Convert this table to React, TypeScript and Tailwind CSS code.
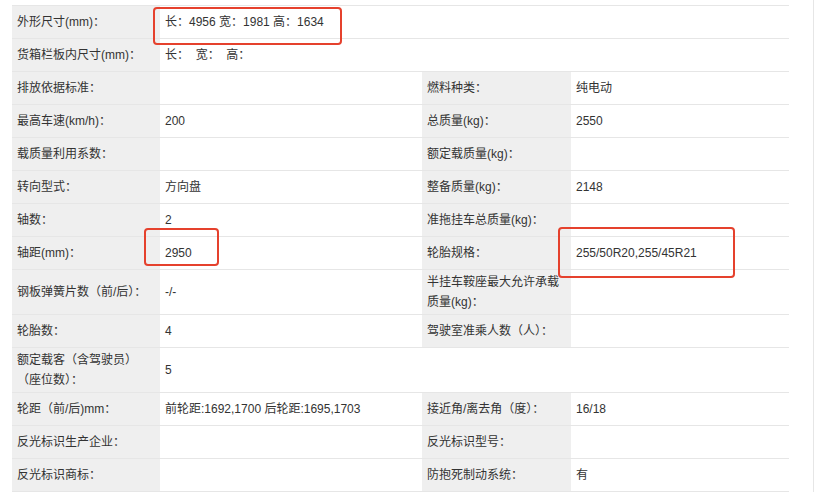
const font = '"Liberation Sans", "Noto Sans CJK SC", sans-serif'

type Cell = { label: string; value?: string }
type Row = { left: Cell; right?: Cell }

const rows: Row[] = [
  { left: { label: '外形尺寸(mm)：', value: '长：4956 宽：1981 高：1634' } },
  { left: { label: '货箱栏板内尺寸(mm)：', value: '长：  宽：  高：' } },
  { left: { label: '排放依据标准：', value: '' }, right: { label: '燃料种类：', value: '纯电动' } },
  { left: { label: '最高车速(km/h)：', value: '200' }, right: { label: '总质量(kg)：', value: '2550' } },
  { left: { label: '载质量利用系数：', value: '' }, right: { label: '额定载质量(kg)：', value: '' } },
  { left: { label: '转向型式：', value: '方向盘' }, right: { label: '整备质量(kg)：', value: '2148' } },
  { left: { label: '轴数：', value: '2' }, right: { label: '准拖挂车总质量(kg)：', value: '' } },
  { left: { label: '轴距(mm)：', value: '2950' }, right: { label: '轮胎规格：', value: '255/50R20,255/45R21' } },
  {
    left: { label: '钢板弹簧片数（前/后）：', value: '-/-' },
    right: { label: '半挂车鞍座最大允许承载质量(kg)：', value: '' },
  },
  { left: { label: '轮胎数：', value: '4' }, right: { label: '驾驶室准乘人数（人）：', value: '' } },
  { left: { label: '额定载客（含驾驶员）\n（座位数）：', value: '5' } },
  {
    left: { label: '轮距（前/后)mm：', value: '前轮距:1692,1700 后轮距:1695,1703' },
    right: { label: '接近角/离去角（度）：', value: '16/18' },
  },
  { left: { label: '反光标识生产企业：', value: '' }, right: { label: '反光标识型号：', value: '' } },
  { left: { label: '反光标识商标：', value: '' }, right: { label: '防抱死制动系统：', value: '有' } },
]

const base = 'flex items-center border-b border-[#e6e6e6] min-h-[33px] py-[2px] leading-[20px]'

function Label({ text }: { text: string }) {
  return <div className={`${base} bg-[#efefef] px-[5px] whitespace-pre-line`}>{text}</div>
}

function Value({ text, wide }: { text?: string; wide?: boolean }) {
  return (
    <div className={`${base} bg-white pl-[5px] pr-[4px] whitespace-pre ${wide ? 'col-span-3' : ''}`}>
      {text}
    </div>
  )
}

export default function App() {
  return (
    <div
      className="relative w-[814px] h-[492px] overflow-hidden bg-white border-r border-[#e6e6e6] pl-[12px] pt-[5px] text-[12px] text-[#333]"
      style={{ fontFamily: font }}
    >
      <div className="grid grid-cols-[148px_262px_149px_218px] border-t border-[#e6e6e6] w-[777px]">
        {rows.map((r, i) => (
          <div key={i} className="contents">
            <Label text={r.left.label} />
            <Value text={r.left.value} wide={!r.right} />
            {r.right && (
              <>
                <Label text={r.right.label} />
                <Value text={r.right.value} />
              </>
            )}
          </div>
        ))}
      </div>

      {/* red annotation boxes */}
      <div className="absolute left-[153px] top-[7px] w-[189px] h-[38px] border-2 border-[#e5412d] rounded-[4px]" />
      <div className="absolute left-[144px] top-[228px] w-[75px] h-[38px] border-2 border-[#e5412d] rounded-[4px]" />
      <div className="absolute left-[558px] top-[227px] w-[177px] h-[51px] border-2 border-[#e5412d] rounded-[4px]" />
    </div>
  )
}
